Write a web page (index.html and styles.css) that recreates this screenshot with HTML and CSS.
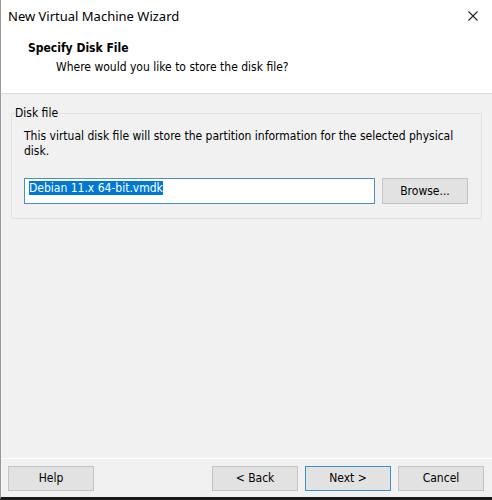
FILE: index.html
```html
<!DOCTYPE html>
<html lang="en">
<head>
<meta charset="utf-8">
<meta name="viewport" content="width=device-width, initial-scale=1">
<title>New Virtual Machine Wizard</title>
<link rel="stylesheet" href="styles.css">
</head>
<body>
<main class="window">
  <header class="header">
    <div class="titlebar">
      <span class="title">New Virtual Machine Wizard</span>
      <button class="close" type="button" aria-label="Close">
        <svg viewBox="0 0 10 10" width="10" height="10" aria-hidden="true"><path d="M.5.5l9 9M9.500.5l-9 9" fill="none" stroke="#222" stroke-width="1.1"/></svg>
      </button>
    </div>
    <h1 class="heading">Specify Disk File</h1>
    <p class="question">Where would you like to store the disk file?</p>
  </header>
  <form class="form">
    <div class="content">
      <fieldset class="group">
        <legend class="legend">Disk file</legend>
        <label class="description" for="path">This virtual disk file will store the partition information for the selected physical disk.</label>
        <div class="file-row">
          <input class="path" id="path" type="text" value="Debian 11.x 64-bit.vmdk" spellcheck="false" autocomplete="off">
          <button class="button" type="button">Browse...</button>
        </div>
      </fieldset>
    </div>
    <footer class="footer">
      <button class="button help" type="button">Help</button>
      <button class="button" type="button">&lt; Back</button>
      <button class="button next" type="button">Next &gt;</button>
      <button class="button" type="button">Cancel</button>
    </footer>
  </form>
</main>
<script src="script.js"></script>
</body>
</html>
```
FILE: styles.css
```css
* {
  box-sizing: border-box;
}

body {
  margin: 0;
  background: #f1f1f1;
  color: #000;
  font: 12px/15px "DejaVu Sans Condensed", "DejaVu Sans", sans-serif;
}

.window {
  display: flex;
  flex-direction: column;
  min-height: 100vh;
  border-left: 1px solid #999;
  border-bottom: 3px solid #1a1a1a;
}

.header {
  padding-bottom: 18px;
  background: #fff;
  border-bottom: 1px solid #d9d9d9;
}

.titlebar {
  display: flex;
  align-items: center;
  justify-content: space-between;
  height: 31px;
  padding: 0 14px 0 7px;
}

.title {
  font: 13px/18px "Noto Sans", sans-serif;
}

.close {
  display: flex;
  padding: 0;
  border: 0;
  background: none;
}

.heading {
  margin: 10px 0 4px 27px;
  font-size: 12px;
  line-height: 15px;
}

.question {
  margin: 0 0 0 55px;
}

.form {
  display: flex;
  flex: 1;
  flex-direction: column;
}

.content {
  flex: 1;
  padding: 12px 10px;
}

.group {
  min-width: 0;
  margin: 0;
  padding: 8px 13px 14px 12px;
  border: 1px solid #e2e2e2;
}

.legend {
  margin-left: -9px;
  padding: 0;
}

.description {
  display: block;
}

.file-row {
  display: flex;
  gap: 7px;
  margin-top: 19px;
}

.path {
  flex: 1;
  min-width: 0;
  height: 26px;
  padding: 1px 4px 7px;
  border: 1px solid #4a90c0;
  outline: 0;
  background: #fff;
  color: #000;
  font: inherit;
}

.path::selection {
  background: #0078d7;
  color: #fff;
}

.button {
  width: 86px;
  height: 26px;
  padding: 0;
  border: 1px solid #c4c4c4;
  background: #e2e2e2;
  color: #000;
  font: inherit;
}

.footer {
  display: flex;
  gap: 7px;
  padding: 7px 8px 6px 7px;
  border-top: 1px solid #fff;
}

.footer .button {
  height: 25px;
}

.footer .help {
  margin-right: auto;
}

.footer .next {
  border-color: #3c91cb;
}
```
FILE: script.js
```js
const path = document.getElementById("path");
path.focus();
path.select();
```
